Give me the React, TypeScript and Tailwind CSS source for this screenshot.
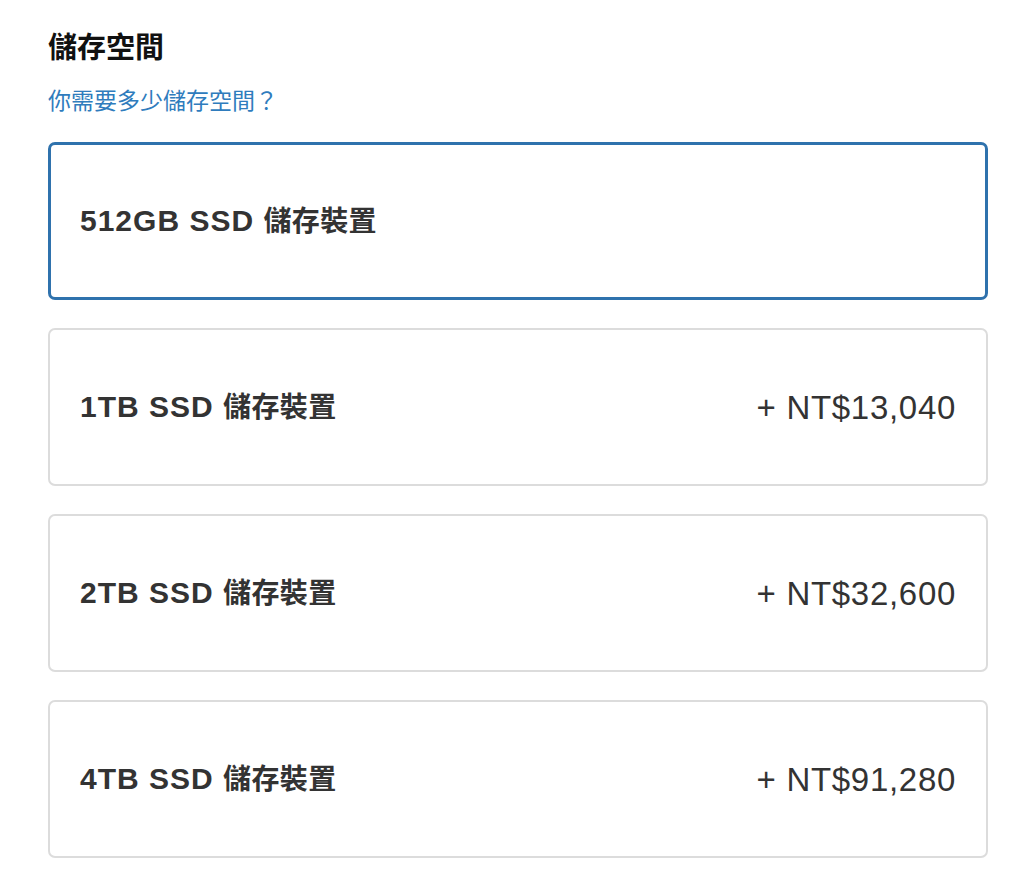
import React from 'react';

interface StorageOption {
  id: string;
  size: string;
  price?: string;
}

const options: StorageOption[] = [
  { id: '512', size: '512GB SSD' },
  { id: '1tb', size: '1TB SSD', price: '+ NT$13,040' },
  { id: '2tb', size: '2TB SSD', price: '+ NT$32,600' },
  { id: '4tb', size: '4TB SSD', price: '+ NT$91,280' },
];

const font = { fontFamily: '"Liberation Sans", "Noto Sans CJK TC", sans-serif' };

const App: React.FC = () => {
  const selected = '512';

  return (
    <div className="min-h-screen bg-white px-[48px] pt-[30px] pb-[32px]" style={font}>
      <h2 className="text-[29px] leading-[36px] font-bold text-[#111111]">儲存空間</h2>
      <a className="block mt-[20px] text-[23px] leading-[30px] text-[#2f7cbd] cursor-pointer">
        你需要多少儲存空間？
      </a>

      <div className="mt-[26px] flex flex-col gap-[28px] w-[940px]">
        {options.map((opt) => {
          const isSelected = opt.id === selected;
          return (
            <button
              key={opt.id}
              className={`h-[158px] flex items-center justify-between rounded-[7px] bg-white text-left ${
                isSelected
                  ? 'border-[3px] border-[#2f72ad] px-[29px]'
                  : 'border-2 border-[#dcdcdc] px-[30px]'
              }`}
            >
              <span className="font-bold text-[#333333] leading-none">
                <span className="text-[30px] tracking-[1px]">{opt.size} </span>
                <span className="text-[28px] tracking-[0.4px]">儲存裝置</span>
              </span>
              {opt.price && (
                <span className="text-[33px] leading-none text-[#333333] tracking-[0.7px]">{opt.price}</span>
              )}
            </button>
          );
        })}
      </div>
    </div>
  );
};

export default App;
